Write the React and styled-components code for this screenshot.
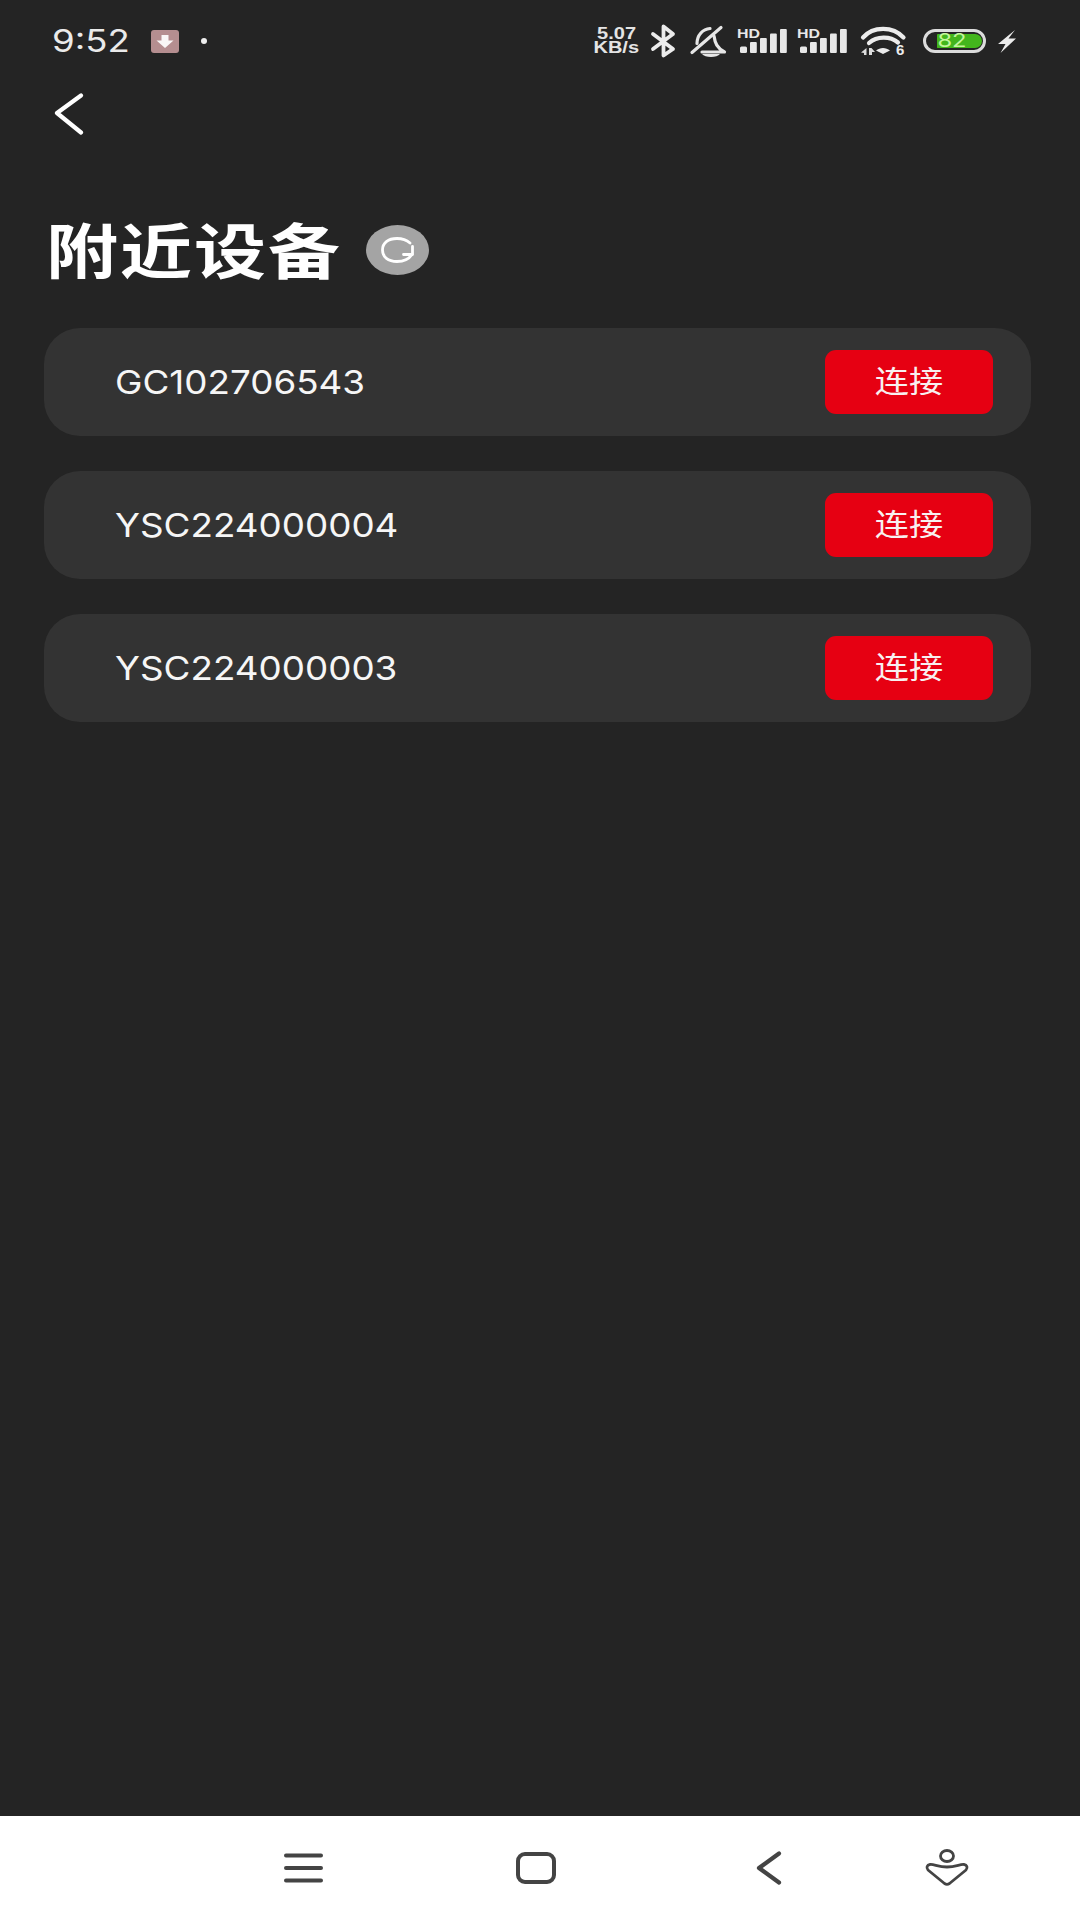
import React from "react";
import styled, { createGlobalStyle } from "styled-components";

const Global = createGlobalStyle`
  html, body { margin: 0; padding: 0; background: #242424; overflow: hidden; }
  * { box-sizing: border-box; }
`;

const Page = styled.div`
  width: 1080px;
  height: 1920px;
  background: #242424;
  display: flex;
  flex-direction: column;
  font-family: Inter, "Noto Sans CJK SC", sans-serif;
  color: #fff;
`;

const StatusBar = styled.div`
  height: 82px;
  flex: none;
  display: flex;
  align-items: center;
  justify-content: space-between;
  padding: 0 64px 0 52px;
`;

const StatusLeft = styled.div`
  display: flex;
  align-items: center;
`;

const Time = styled.span`
  display: block;
  width: 99px;
  font-size: 31px;
  line-height: 36px;
  color: #eaeaea;
  white-space: nowrap;
  transform: scaleX(1.18);
  transform-origin: left center;
`;

const Dot = styled.span`
  width: 6px;
  height: 6px;
  border-radius: 50%;
  background: #eee;
  margin-left: 22px;
`;

const StatusRight = styled.div`
  display: flex;
  align-items: center;
`;

const Speed = styled.div`
  width: 47px;
  margin-right: 11px;
  display: flex;
  flex-direction: column;
  align-items: center;
  font-family: "Liberation Sans", sans-serif;
  font-weight: 700;
  font-size: 16px;
  line-height: 14px;
  color: #e4e4e4;
  white-space: nowrap;
`;

const SpeedLine = styled.span`
  display: block;
  transform: scaleX(1.25);
`;

const IconSlot = styled.svg`
  display: block;
  flex: none;
  overflow: visible;
  margin-right: ${(p) => p.$gap || 0}px;
`;

const Battery = styled.div`
  position: relative;
  width: 63px;
  height: 24px;
  margin-right: 12px;
  border: 3px solid #dcdcdc;
  border-radius: 12px;
  padding: 2px 1px 2px 11px;
`;

const BatteryFill = styled.div`
  height: 100%;
  background: #43b51c;
  border-radius: 1px 8px 8px 1px;
`;

const BatteryLabel = styled.span`
  position: absolute;
  left: 12px;
  top: -3px;
  width: 28px;
  font-size: 19px;
  line-height: 24px;
  text-align: center;
  color: #c3f59c;
  transform: scaleX(1.25);
`;

const BackRow = styled.div`
  height: 64px;
  flex: none;
  padding-left: 53px;
  display: flex;
  align-items: center;
`;

const PlainIcon = styled.svg`
  display: block;
`;

const TitleRow = styled.div`
  flex: none;
  height: 80px;
  margin-top: 64px;
  padding-left: 46px;
  display: flex;
  align-items: center;
`;

const Title = styled.h1`
  margin: 0 0 5px;
  width: 320px;
  font-family: "Noto Sans CJK SC", sans-serif;
  font-size: 60px;
  line-height: 80px;
  font-weight: 700;
  letter-spacing: 1.7px;
  white-space: nowrap;
  transform: scaleX(1.2);
  transform-origin: left center;
`;

const RefreshBadge = styled.div`
  width: 63px;
  height: 50px;
  border-radius: 50%;
  background: #a4a4a4;
  display: flex;
  align-items: center;
  justify-content: center;
`;

const DeviceList = styled.div`
  margin: 38px 49px 0 44px;
  display: flex;
  flex-direction: column;
  gap: 35px;
`;

const DeviceCard = styled.div`
  height: 108px;
  background: #333333;
  border-radius: 36px;
  display: flex;
  align-items: center;
  justify-content: space-between;
  padding: 0 38px 0 71px;
`;

const DeviceName = styled.span`
  display: block;
  font-size: 33px;
  line-height: 40px;
  color: #f6f6f6;
  white-space: nowrap;
  transform: scaleX(1.115);
  transform-origin: left center;
`;

const ConnectButton = styled.button`
  width: 168px;
  height: 64px;
  border: 0;
  border-radius: 11px;
  background: #e60012;
  color: #f8f0f0;
  font-family: "Noto Sans CJK SC", sans-serif;
  font-size: 30px;
  padding: 0 0 7px;
  display: flex;
  align-items: center;
  justify-content: center;
`;

const ButtonLabel = styled.span`
  display: block;
  transform: scaleX(1.14);
`;

const Spacer = styled.div`
  flex: 1;
`;

const NavBar = styled.div`
  flex: none;
  height: 104px;
  background: #fff;
  display: flex;
  align-items: center;
  padding-left: 284px;
`;

const Signal = ({ gap }) => (
  <IconSlot $gap={gap} width="50" height="26" viewBox="0 0 50 26">
    <text x="0" y="10" fontFamily="Liberation Sans, sans-serif" fontWeight="700" fontSize="12.5" textLength="23" lengthAdjust="spacingAndGlyphs" fill="#e8e8e8">HD</text>
    <g fill="#e8e8e8">
      <rect x="3" y="18.500" width="7" height="6.500" rx="1.500" />
      <rect x="13" y="14" width="6.800" height="11" rx="1" />
      <rect x="23" y="10" width="6.800" height="15" rx="1" />
      <rect x="33" y="5.500" width="6.800" height="19.500" rx="1" />
      <rect x="43" y="1" width="6.800" height="24" rx="1" />
    </g>
  </IconSlot>
);

export default function App() {
  const devices = ["GC102706543", "YSC224000004", "YSC224000003"];
  return (
    <Page>
      <Global />
      <StatusBar>
        <StatusLeft>
          <Time>9:52</Time>
          <IconSlot width="28" height="23" viewBox="0 0 28 23">
            <rect width="28" height="23" rx="3" fill="#b58e90" />
            <path d="M10.500 5h7v5.500h5L14 18 5.500 10.500h5z" fill="#fff" opacity=".92" />
          </IconSlot>
          <Dot />
        </StatusLeft>
        <StatusRight>
          <Speed>
            <SpeedLine>5.07</SpeedLine>
            <SpeedLine>KB/s</SpeedLine>
          </Speed>
          <IconSlot $gap={14} width="25" height="32" viewBox="0 0 25 32">
            <path d="M2 9l20 15-9.500 6.500V1.500L22 9 2 24" fill="none" stroke="#ececec" strokeWidth="3.800" strokeLinejoin="round" strokeLinecap="round" />
          </IconSlot>
          <IconSlot $gap={11} width="36" height="31" viewBox="0 0 36 31">
            <g fill="none" stroke="#e6e6e6" strokeWidth="3.200" strokeLinecap="round" strokeLinejoin="round">
              <path d="M2 26.500L31 1.500" />
              <path d="M7 17.500C7 9 13 3 20 2.500" />
              <path d="M24 10c1 7 3 12 10.500 16H12" />
            </g>
            <path d="M12 28h18c-1.500 1.900-5 3-9 3s-7.500-1.100-9-3z" fill="#e6e6e6" />
          </IconSlot>
          <Signal gap={10} />
          <Signal gap={13} />
          <IconSlot $gap={16} width="47" height="28" viewBox="0 0 47 28">
            <g fill="none" stroke="#ececec" strokeWidth="4.200" strokeLinecap="round">
              <path d="M3 10.500C13 -1 33 -1 43.500 10.500" />
              <path d="M9 16c8-7 21-7 29-.5" />
            </g>
            <path d="M16 23.500c4-3.500 10-3.500 14 0l-7 3.500z" fill="#ececec" />
            <path d="M1 25.500L6.500 21v7H4v-2zM9 21h2.500l3.500 4h-3v3H9z" fill="#dcdcdc" />
            <text x="36" y="28" fontFamily="Liberation Sans, sans-serif" fontWeight="700" fontSize="15" fill="#ececec">6</text>
          </IconSlot>
          <Battery>
            <BatteryFill />
            <BatteryLabel>82</BatteryLabel>
          </Battery>
          <IconSlot width="18" height="23" viewBox="0 0 18 23">
            <path d="M17 0L0 14h7.500L2.500 23 18 8.500h-7.500z" fill="#ececec" />
          </IconSlot>
        </StatusRight>
      </StatusBar>

      <BackRow>
        <PlainIcon width="32" height="42" viewBox="0 0 32 42">
          <path d="M28 2.500L4 20l24 19.500" fill="none" stroke="#fff" strokeWidth="4.200" strokeLinecap="round" strokeLinejoin="round" />
        </PlainIcon>
      </BackRow>

      <TitleRow>
        <Title>附近设备</Title>
        <RefreshBadge>
          <PlainIcon width="36" height="26" viewBox="0 0 36 26">
            <g fill="none" stroke="#fff" strokeWidth="2.800" strokeLinecap="round" strokeLinejoin="round">
              <path d="M30 6C26 2.500 22 1.500 17 1.500 8 1.500 2.500 6 2.500 13S8 24.500 17 24.500c7 0 12-2.500 15-7" />
              <path d="M23.500 17.500h9V9.500" />
            </g>
          </PlainIcon>
        </RefreshBadge>
      </TitleRow>

      <DeviceList>
        {devices.map((d) => (
          <DeviceCard key={d}>
            <DeviceName>{d}</DeviceName>
            <ConnectButton>
              <ButtonLabel>连接</ButtonLabel>
            </ConnectButton>
          </DeviceCard>
        ))}
      </DeviceList>

      <Spacer />

      <NavBar>
        <IconSlot $gap={193} width="39" height="30" viewBox="0 0 39 30">
          <g stroke="#444" strokeWidth="4" strokeLinecap="round">
            <path d="M2 2.500h35M2 15h35M2 27.500h35" />
          </g>
        </IconSlot>
        <IconSlot $gap={200} width="40" height="32" viewBox="0 0 40 32">
          <rect x="2" y="2" width="36" height="28" rx="7" fill="none" stroke="#444" strokeWidth="4" />
        </IconSlot>
        <IconSlot $gap={143} width="26" height="34" viewBox="0 0 26 34">
          <path d="M23 2.500L3 17l20 14.500" fill="none" stroke="#444" strokeWidth="4.200" strokeLinecap="round" strokeLinejoin="round" />
        </IconSlot>
        <IconSlot width="44" height="38" viewBox="0 0 44 38">
          <g fill="none" stroke="#444" strokeWidth="2.800" strokeLinejoin="round">
            <ellipse cx="22" cy="7" rx="6.500" ry="5.500" />
            <path d="M5 15.500c4-.5 8 2.500 17 2.500s13-3 17-2.500c3 .4 4 3 2 5.500L24.500 34.500c-1.500 1-3.500 1-5 0L3 21c-2-2.500-1-5.100 2-5.500z" />
          </g>
        </IconSlot>
      </NavBar>
    </Page>
  );
}
